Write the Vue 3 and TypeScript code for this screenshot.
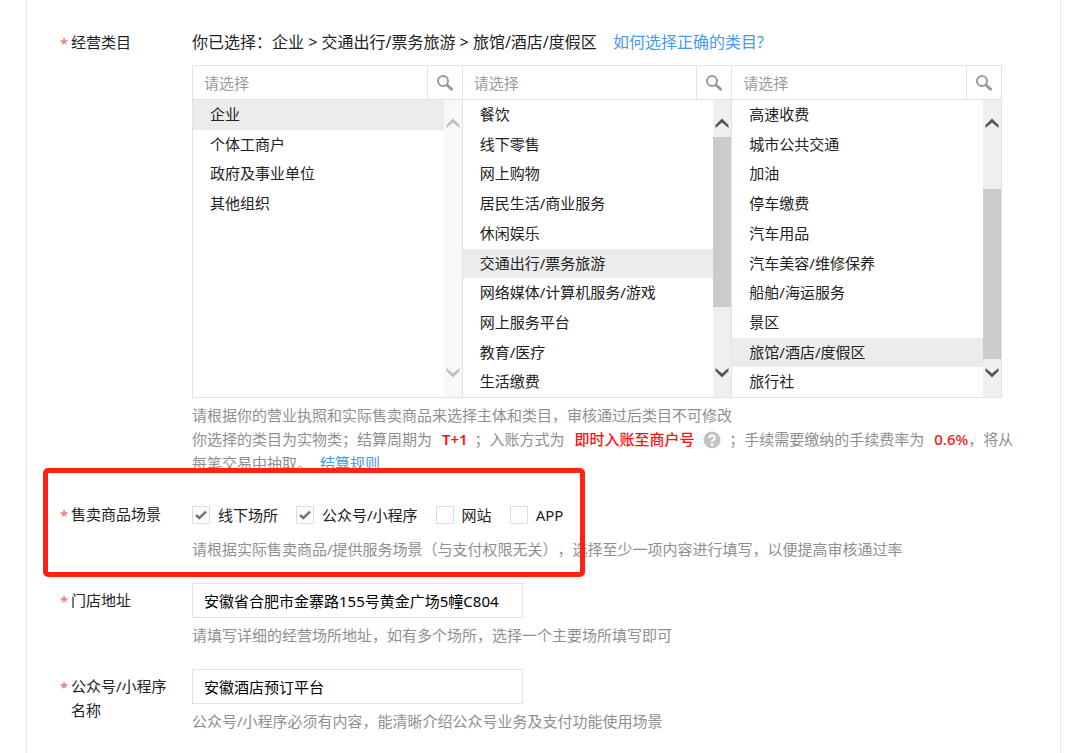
<script setup lang="ts">
import { ref } from 'vue'

interface Column {
  name: string
  items: string[]
  selected: string
  enabled: boolean
  before: number
  thumb: number
  after: number
}

const columns: Column[] = [
  {
    name: '主体类型',
    items: ['企业', '个体工商户', '政府及事业单位', '其他组织'],
    selected: '企业',
    enabled: false,
    before: 0,
    thumb: 0,
    after: 1,
  },
  {
    name: '一级类目',
    items: [
      '餐饮', '线下零售', '网上购物', '居民生活/商业服务', '休闲娱乐',
      '交通出行/票务旅游', '网络媒体/计算机服务/游戏', '网上服务平台', '教育/医疗', '生活缴费',
    ],
    selected: '交通出行/票务旅游',
    enabled: true,
    before: 0,
    thumb: 170,
    after: 52,
  },
  {
    name: '二级类目',
    items: [
      '高速收费', '城市公共交通', '加油', '停车缴费', '汽车用品',
      '汽车美容/维修保养', '船舶/海运服务', '景区', '旅馆/酒店/度假区', '旅行社',
    ],
    selected: '旅馆/酒店/度假区',
    enabled: true,
    before: 52,
    thumb: 170,
    after: 0,
  },
]

const scenes = ref([
  { id: 'offline', label: '线下场所', checked: true },
  { id: 'mini', label: '公众号/小程序', checked: true },
  { id: 'site', label: '网站', checked: false },
  { id: 'app', label: 'APP', checked: false },
])

const address = ref('安徽省合肥市金寨路155号黄金广场5幢C804')
const account = ref('安徽酒店预订平台')
</script>

<template>
  <form class="panel" @submit.prevent>
    <section class="field">
      <div class="label"><span class="star">*</span><span>经营类目</span></div>
      <div class="content">
        <p class="chosen">
          你已选择：企业 &gt; 交通出行/票务旅游 &gt; 旅馆/酒店/度假区
          <a class="link" href="#">如何选择正确的类目?</a>
        </p>
        <div class="picker">
          <div v-for="col in columns" :key="col.name" class="column">
            <div class="search">
              <input class="query" type="text" placeholder="请选择" :aria-label="col.name" />
              <button class="find" type="button" aria-label="搜索">
                <svg width="18" height="18" viewBox="0 0 18 18" fill="none" stroke="#9a9a9a">
                  <circle cx="7" cy="7" r="5" stroke-width="2" />
                  <path d="M11 11L15.5 15.2" stroke-width="3" stroke-linecap="round" />
                </svg>
              </button>
            </div>
            <div class="list">
              <ul class="options">
                <li v-for="item in col.items" :key="item" :class="{ active: item === col.selected }">{{ item }}</li>
              </ul>
              <div class="bar" :class="{ enabled: col.enabled }">
                <svg class="arrow" width="14" height="10" viewBox="0 0 14 10">
                  <path d="M0.5 6.9L7 0.4L13.5 6.9V9.9L7 4.4L0.5 9.9Z" />
                </svg>
                <div class="track">
                  <div :style="{ flexGrow: col.before }"></div>
                  <div class="thumb" :style="{ flexGrow: col.thumb }"></div>
                  <div :style="{ flexGrow: col.after }"></div>
                </div>
                <svg class="arrow" width="14" height="10" viewBox="0 0 14 10">
                  <path d="M0.5 3.1L7 9.6L13.5 3.1V0.1L7 5.6L0.5 0.1Z" />
                </svg>
              </div>
            </div>
          </div>
        </div>
        <p class="help">
          请根据你的营业执照和实际售卖商品来选择主体和类目，审核通过后类目不可修改<br />
          你选择的类目为实物类；结算周期为 <strong>T+1</strong> ；入账方式为 <em>即时入账至商户号</em>
          <svg class="hint" width="18" height="18" viewBox="0 0 18 18">
            <circle cx="9" cy="9" r="8.5" fill="#c3c3c3" />
            <path d="M6.2 7C6.2 3.6 11.8 3.6 11.8 6.9C11.8 8.8 9 8.9 9 11" fill="none" stroke="#fff" stroke-width="2" />
            <circle cx="9" cy="13.6" r="1.3" fill="#fff" />
          </svg>
          ；手续需要缴纳的手续费率为 <em>0.6%</em>，将从<br />
          每笔交易中抽取。 <a class="link" href="#">结算规则</a>
        </p>
      </div>
    </section>

    <section class="field control framed">
      <div class="label"><span class="star">*</span><span>售卖商品场景</span></div>
      <div class="content">
        <div class="scenes">
          <label v-for="scene in scenes" :key="scene.id" class="scene">
            <input v-model="scene.checked" type="checkbox" />
            <svg v-if="scene.checked" class="tick" width="18" height="18" viewBox="0 0 18 18">
              <path d="M4 9L7.3 12L14 5.6" fill="none" stroke="#777" stroke-width="2.5" />
            </svg>
            <span>{{ scene.label }}</span>
          </label>
        </div>
        <p class="help">请根据实际售卖商品/提供服务场景（与支付权限无关），选择至少一项内容进行填写，以便提高审核通过率</p>
      </div>
    </section>

    <section class="field control">
      <label class="label" for="address"><span class="star">*</span><span>门店地址</span></label>
      <div class="content">
        <input id="address" v-model="address" class="text" type="text" />
        <p class="help">请填写详细的经营场所地址，如有多个场所，选择一个主要场所填写即可</p>
      </div>
    </section>

    <section class="field control">
      <label class="label" for="account"><span class="star">*</span><span>公众号/小程序名称</span></label>
      <div class="content">
        <input id="account" v-model="account" class="text" type="text" />
        <p class="help">公众号/小程序必须有内容，能清晰介绍公众号业务及支付功能使用场景</p>
      </div>
    </section>
  </form>
</template>

<style>
body {
  margin: 0;
  background: #fff;
}
</style>

<style scoped>
.panel {
  box-sizing: border-box;
  display: flex;
  flex-direction: column;
  gap: 22px;
  min-height: 100vh;
  margin: 0 20px 0 26px;
  padding: 30px 38px 20px 33px;
  border: solid #e7e7eb;
  border-width: 0 1px;
  color: #222;
  font: 15px/24px "Noto Sans", "Noto Sans CJK SC", sans-serif;
  text-spacing-trim: space-all;
}

input,
button {
  font: inherit;
  color: inherit;
}

.field {
  position: relative;
  display: grid;
  grid-template-columns: 112px minmax(0, 1fr);
  column-gap: 20px;
}

.label {
  display: flex;
  align-items: flex-start;
}

.control > .label {
  padding-top: 5px;
}

.star {
  flex: 0 0 11px;
  line-height: 26px;
  color: #e8686c;
}

.chosen,
.help {
  margin: 0;
}

.chosen {
  font-size: 16px;
}

.link {
  color: #459ae9;
  text-decoration: none;
}

.chosen .link {
  margin-left: 12px;
}

.picker {
  display: grid;
  grid-template-columns: repeat(3, minmax(0, 1fr));
  margin: 11px 20px 0 0;
  border: solid #e2e2e5;
  border-width: 0 1px 0 0;
}

.column {
  border: 1px solid #e2e2e5;
  border-right: 0;
}

.search {
  display: flex;
  height: 33px;
  border-bottom: 1px solid #e2e2e5;
}

.query {
  flex: 1;
  min-width: 0;
  padding: 0 11px;
  border: 0;
  outline: 0;
  background: transparent;
}

.query::placeholder {
  color: #9a9a9a;
}

.find {
  display: grid;
  place-items: center;
  width: 35px;
  padding: 0;
  border: 0;
  border-left: 1px solid #e2e2e5;
  background: #fff;
}

.list {
  display: flex;
  height: 297px;
}

.options {
  flex: 1;
  display: grid;
  grid-template-rows: repeat(10, minmax(0, 1fr));
  align-items: stretch;
  margin: 0;
  padding: 0;
  list-style: none;
}

.options li {
  padding-left: 17px;
  line-height: 29px;
  white-space: nowrap;
}

.options .active {
  background: #ececec;
}

.bar {
  box-sizing: border-box;
  display: flex;
  flex-direction: column;
  align-items: center;
  gap: 9px;
  width: 18px;
  padding: 18px 0 19px;
  background: #f8f8f8;
}

.arrow {
  flex: none;
  fill: #bfbfbf;
}

.enabled {
  background: #efefef;
}

.enabled .arrow {
  fill: #555;
}

.track {
  flex: 1;
  display: flex;
  flex-direction: column;
  width: 100%;
}

.thumb {
  background: #cbcbcb;
}

.help {
  margin-top: 5px;
  color: #8f8f8f;
}

.help strong,
.help em {
  margin-left: 6px;
  color: #f11;
  font-style: normal;
  font-weight: 500;
}

.help strong {
  margin-right: 3px;
  font-weight: 600;
}

.hint {
  margin: 0 4px 0 9px;
  vertical-align: -4px;
}

.help .link {
  margin-left: 4px;
}

.scenes {
  display: flex;
  gap: 18px;
  height: 35px;
}

.scene {
  position: relative;
  display: flex;
  align-items: center;
  gap: 8px;
}

.scene input {
  appearance: none;
  box-sizing: border-box;
  width: 18px;
  height: 18px;
  margin: 0;
  border: 1px solid #dcdce0;
  background: #fff;
}

.tick {
  position: absolute;
  left: 0;
  pointer-events: none;
}

.framed::after {
  content: "";
  position: absolute;
  top: -29px;
  left: -17px;
  box-sizing: border-box;
  width: 542px;
  height: 109px;
  border: 5px solid #ff2113;
  border-radius: 5px;
  pointer-events: none;
}

.text {
  display: block;
  box-sizing: border-box;
  width: 331px;
  max-width: 100%;
  height: 35px;
  padding: 0 11px;
  border: 1px solid #e2e2e5;
  outline: 0;
  background: #fff;
  color: #000;
}
</style>
